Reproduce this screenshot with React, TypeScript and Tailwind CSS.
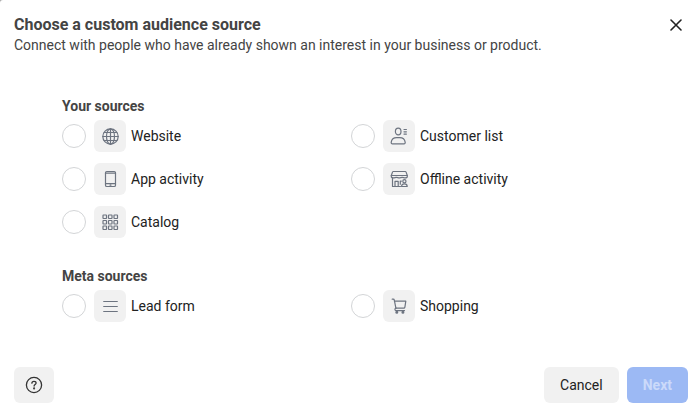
import { useState } from "react";
import type { ReactNode } from "react";

type Source = {
  id: string;
  name: string;
  icon: ReactNode;
};

type IconProps = {
  children: ReactNode;
};

function Icon({ children }: IconProps) {
  return (
    <svg
      className="w-5 h-5 text-[#6d7480]"
      viewBox="0 0 20 20"
      fill="none"
      stroke="currentColor"
      strokeWidth="1.2"
      strokeLinecap="round"
      strokeLinejoin="round"
      aria-hidden="true"
    >
      {children}
    </svg>
  );
}

const globeIcon = (
  <Icon>
    <circle cx="10.5" cy="10.5" r="7.7" />
    <ellipse cx="10.5" cy="10.5" rx="4" ry="7.7" />
    <path d="M10.5 2.8v15.4M2.8 10.5h15.4M4.2 6.5h12.6M4.2 14.5h12.6" />
  </Icon>
);

const phoneIcon = (
  <Icon>
    <rect x="5.5" y="2.5" width="10" height="15" rx="1.3" />
    <path d="M5.5 4.2h10M5.5 14.6h10M10 16.1h1" />
  </Icon>
);

const catalogIcon = (
  <Icon>
    {[3, 8.5, 14].map((y) =>
      [3, 8.5, 14].map((x) => (
        <rect key={`${x}-${y}`} x={x} y={y} width="3.5" height="3.5" rx="0.4" />
      ))
    )}
  </Icon>
);

const customerIcon = (
  <Icon>
    <ellipse cx="9.2" cy="5.5" rx="2.8" ry="3.3" />
    <path d="M3.4 17.8h11.6c.9 0 1.3-.6 1.2-1.4-.4-3-2.7-4.7-5.5-4.7H7.7c-2.8 0-5.1 1.7-5.5 4.7-.1.8.3 1.4 1.2 1.4z" />
    <path d="M15 3.5h2.4M15 5.8h2.4M15 8.1h2.4" />
  </Icon>
);

const storeIcon = (
  <Icon>
    <path d="M4.2 2.5h12.2c.3 0 .5.1.6.4l1.3 3.6H2.3l1.3-3.6c.1-.3.3-.4.6-.4z" />
    <path d="M2.3 6.5v.9c0 1 1.2 1.4 2.2 1.4 1 0 1.9-.4 2.9-.4s1.9.4 2.9.4 1.9-.4 2.9-.4 1.9.4 2.9.4 2.2-.4 2.2-1.4v-.9" />
    <path d="M3.5 8.8v8.7h8M6 17.3v-5h3.2v5M11.3 15.2v-3h1" />
    <circle cx="15.4" cy="12.2" r="1.6" />
    <path d="M12.6 17.5c0-1.7 1-2.7 2.8-2.7s2.8 1 2.8 2.7z" />
  </Icon>
);

const formIcon = (
  <Icon>
    <path d="M3.7 5.5h13.6M3.7 10.5h13.6M3.7 15.5h13.6" />
  </Icon>
);

const cartIcon = (
  <Icon>
    <path d="M3.2 3.2h1c.7 0 1 .3 1.1.9l1.6 8" />
    <path d="M5.5 5.2h11.3l-.9 5.9c-.1.6-.5 1-1.1 1H6.9" />
    <path d="M6.9 12.1c-1.3.4-1.3 2.5.2 2.5h8.4" />
    <circle cx="7.8" cy="16.2" r="0.9" fill="currentColor" />
    <circle cx="13.9" cy="16.2" r="0.9" fill="currentColor" />
  </Icon>
);

const yourSources: Source[] = [
  { id: "website", name: "Website", icon: globeIcon },
  { id: "customer-list", name: "Customer list", icon: customerIcon },
  { id: "app-activity", name: "App activity", icon: phoneIcon },
  { id: "offline-activity", name: "Offline activity", icon: storeIcon },
  { id: "catalog", name: "Catalog", icon: catalogIcon },
];

const metaSources: Source[] = [
  { id: "lead-form", name: "Lead form", icon: formIcon },
  { id: "shopping", name: "Shopping", icon: cartIcon },
];

type SourceGroupProps = {
  title: string;
  sources: Source[];
  selected: string | null;
  onSelect: (id: string) => void;
};

function SourceGroup({ title, sources, selected, onSelect }: SourceGroupProps) {
  return (
    <fieldset>
      <legend className="mb-1 text-[14px] leading-5 font-bold text-[#444]">
        {title}
      </legend>
      <div className="grid grid-cols-2 gap-y-[11px]">
        {sources.map((source) => (
          <label
            key={source.id}
            htmlFor={source.id}
            className="flex items-center cursor-pointer"
          >
            <input
              type="radio"
              id={source.id}
              name="source"
              value={source.id}
              checked={selected === source.id}
              onChange={() => onSelect(source.id)}
              className="w-6 h-6 shrink-0 appearance-none rounded-full border border-[#d3d5d7] bg-white checked:border-[7px] checked:border-[#1877f2]"
            />
            <span className="ml-2 mr-[5px] flex w-8 h-8 shrink-0 items-center justify-center rounded-md bg-[#f1f1f1]">
              {source.icon}
            </span>
            <span className="text-[14px] leading-5 text-[#222]">
              {source.name}
            </span>
          </label>
        ))}
      </div>
    </fieldset>
  );
}

export default function App() {
  const [selected, setSelected] = useState<string | null>(null);

  return (
    <main className="flex min-h-screen bg-[#a8a8a8] font-['Roboto',sans-serif]">
      <div
        role="dialog"
        aria-labelledby="dialog-title"
        className="flex flex-1 flex-col rounded-tl-[3px] bg-white pt-3.5 pb-1.5 pl-3.5 pr-3"
      >
        {/* Header */}
        <header className="flex items-center justify-between">
          <div className="text-[#444]">
            <h1 id="dialog-title" className="text-[16px] leading-[22px] font-bold">
              Choose a custom audience source
            </h1>
            <p className="text-[14px] leading-[18px]">
              Connect with people who have already shown an interest in your
              business or product.
            </p>
          </div>
          <button
            type="button"
            aria-label="Close"
            className="flex w-6 h-[22px] items-center justify-center self-start text-[#222]"
          >
            <svg
              className="w-3 h-3"
              viewBox="0 0 12 12"
              stroke="currentColor"
              strokeWidth="1.6"
              strokeLinecap="round"
              aria-hidden="true"
            >
              <path d="M1 1l10 10M11 1L1 11" />
            </svg>
          </button>
        </header>

        {/* Sources */}
        <div className="flex flex-1 flex-col gap-7 px-12 pt-[42px] pb-10">
          <SourceGroup
            title="Your sources"
            sources={yourSources}
            selected={selected}
            onSelect={setSelected}
          />
          <SourceGroup
            title="Meta sources"
            sources={metaSources}
            selected={selected}
            onSelect={setSelected}
          />
        </div>

        {/* Footer */}
        <footer className="flex items-center justify-between">
          <button
            type="button"
            aria-label="Help"
            className="flex w-10 h-9 items-center justify-center rounded-md bg-[#f1f1f1] text-[#333]"
          >
            <svg
              className="w-[18px] h-[18px]"
              viewBox="0 0 18 18"
              fill="none"
              stroke="currentColor"
              strokeWidth="1.3"
              strokeLinecap="round"
              strokeLinejoin="round"
              aria-hidden="true"
            >
              <circle cx="9" cy="9" r="7.6" />
              <path d="M6.9 7.2c0-1.2.9-1.9 2.1-1.9s2.1.7 2.1 1.8c0 1.4-2 1.5-2 2.9" />
              <circle cx="9.1" cy="12.4" r="0.4" fill="currentColor" />
            </svg>
          </button>
          <div className="flex gap-2">
            <button
              type="button"
              className="h-9 rounded-md bg-[#f1f1f1] px-4 text-[14px] leading-5 text-[#222]"
            >
              Cancel
            </button>
            <button
              type="button"
              disabled={!selected}
              className="h-9 rounded-md bg-[#1877f2] px-4 text-[14px] leading-5 font-bold text-white disabled:bg-[#9cb9f4] disabled:text-[#cbdafa]"
            >
              Next
            </button>
          </div>
        </footer>
      </div>
    </main>
  );
}
